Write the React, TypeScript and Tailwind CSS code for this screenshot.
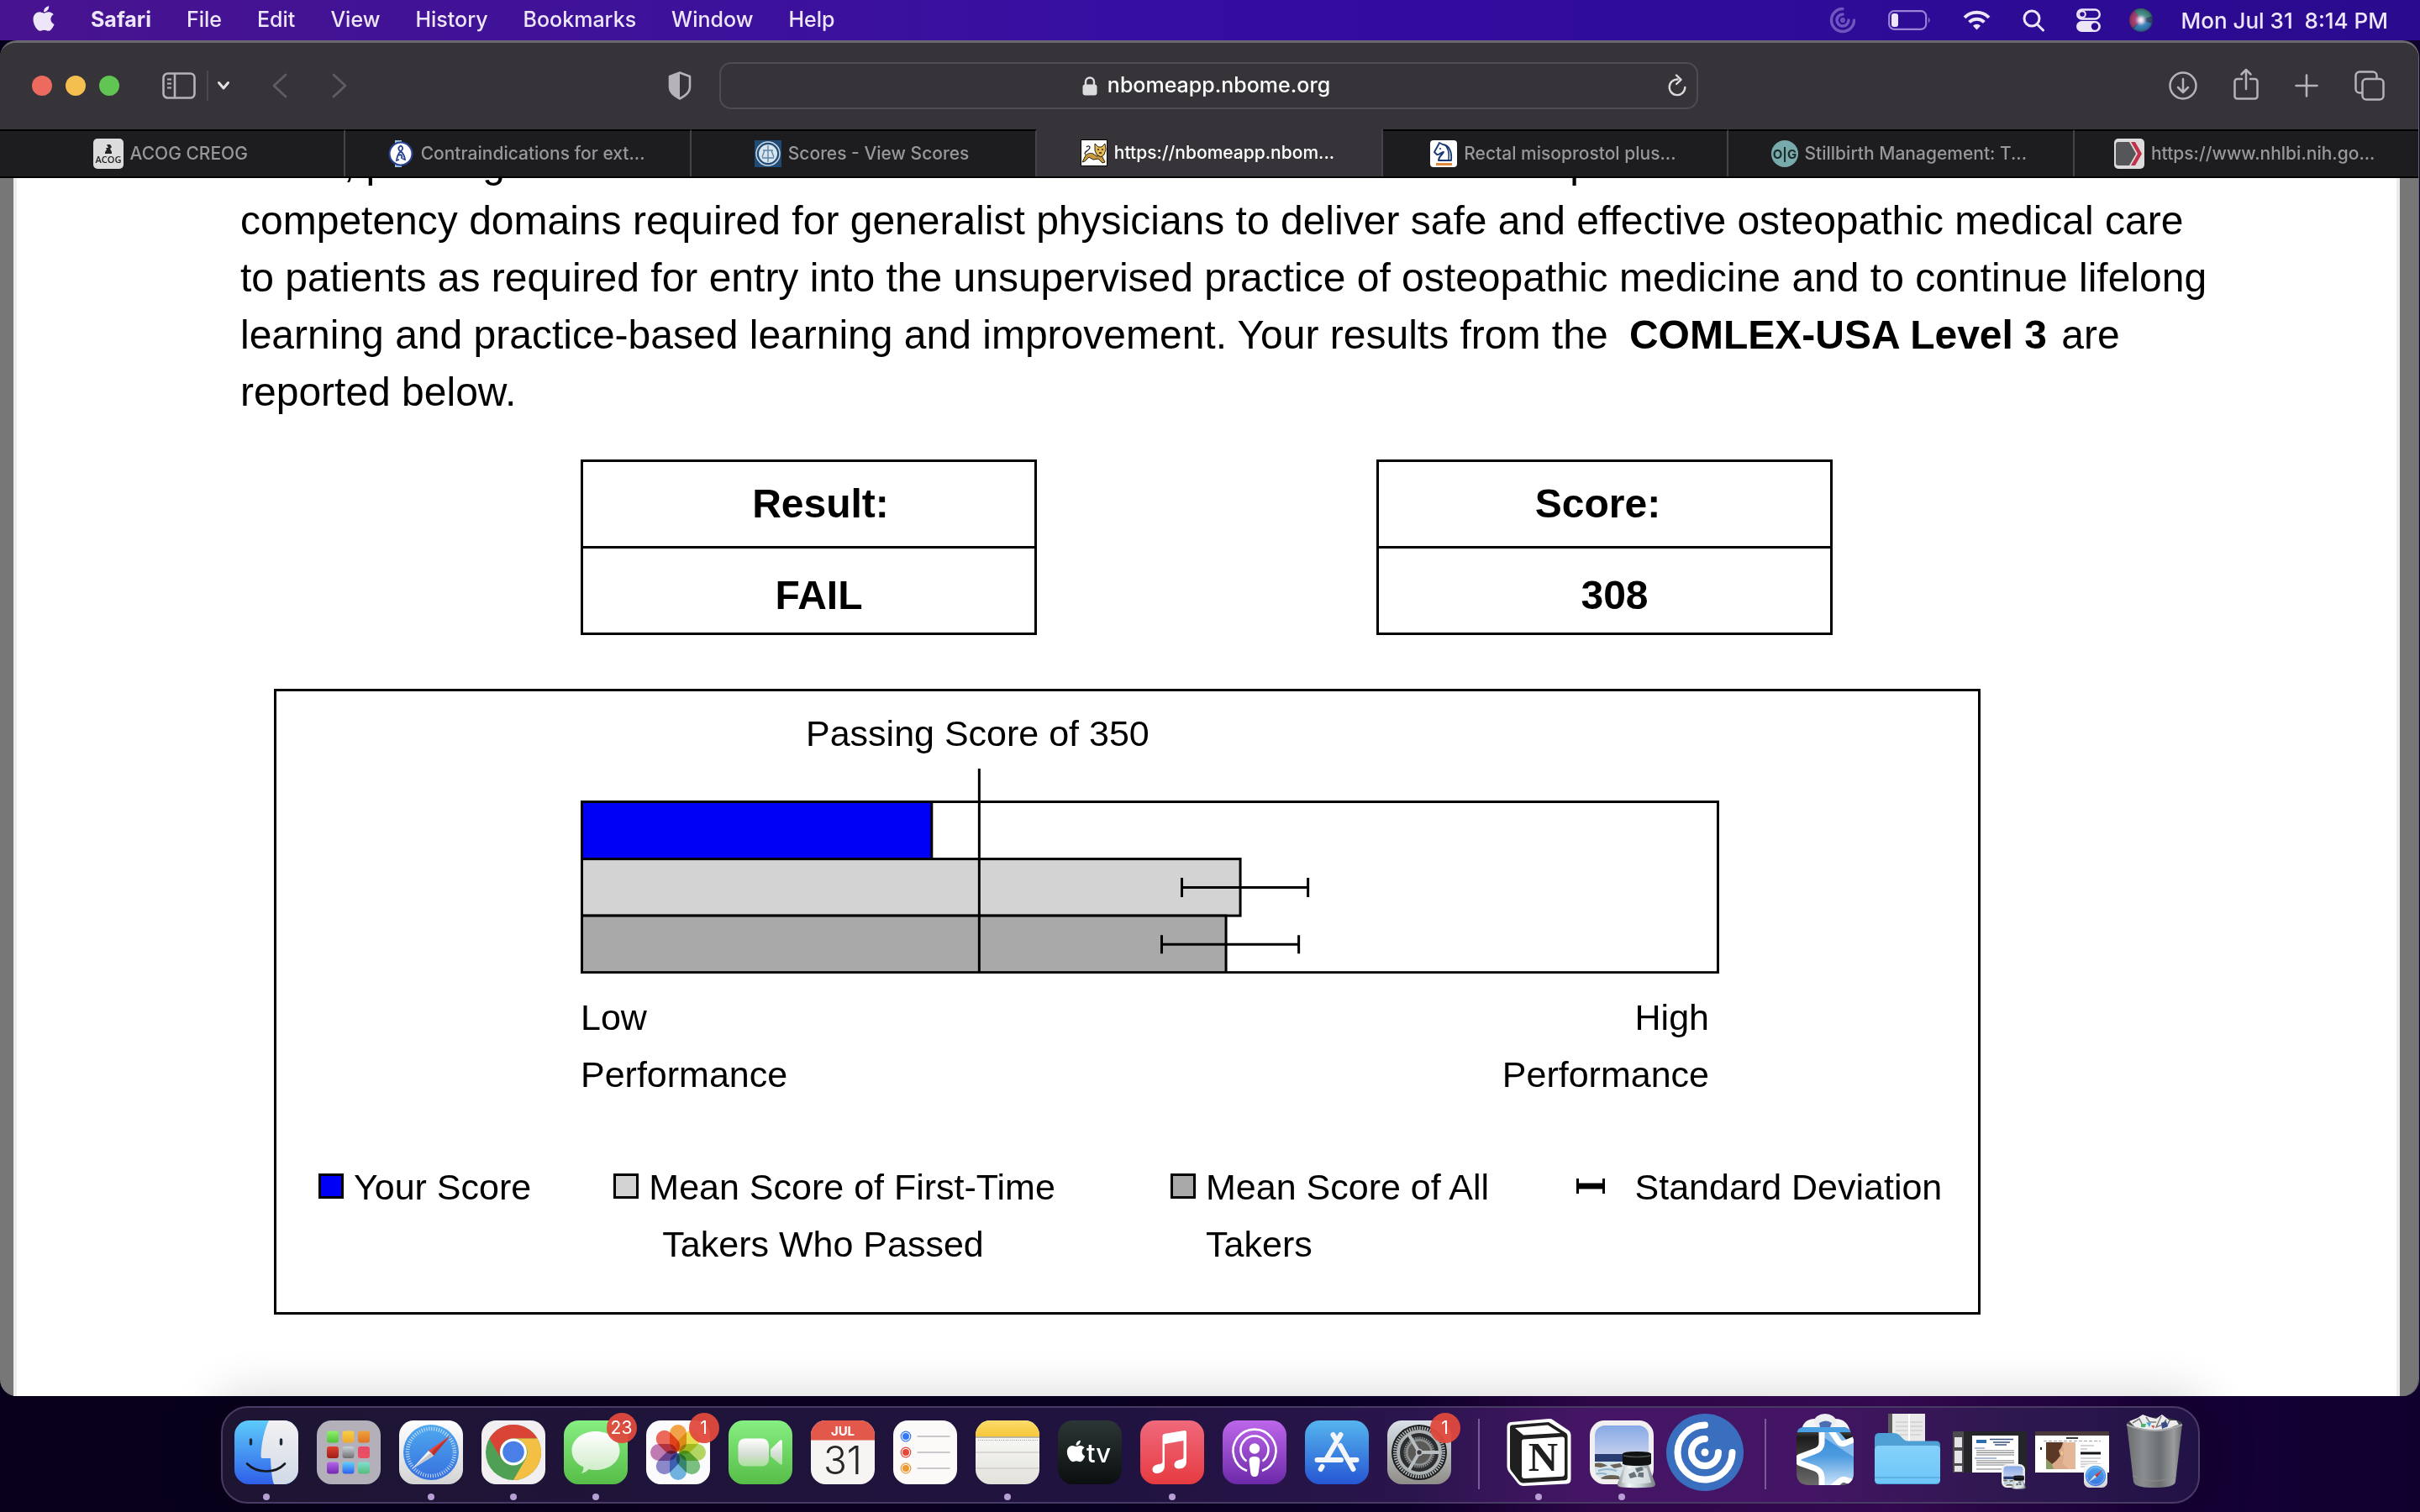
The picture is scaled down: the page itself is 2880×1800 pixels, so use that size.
import React from "react";
import { FaApple } from "react-icons/fa";

type Stop = [string, string];

function Gradient({ id, stops, horizontal = false }: { id: string; stops: Stop[]; horizontal?: boolean }) {
  return (
    <linearGradient id={id} x1="0" y1="0" x2={horizontal ? "1" : "0"} y2={horizontal ? "0" : "1"}>
      {stops.map(([offset, color]) => (
        <stop key={offset + color} offset={offset} stopColor={color} />
      ))}
    </linearGradient>
  );
}

/* ---------- Menu bar ---------- */

const menus = ["File", "Edit", "View", "History", "Bookmarks", "Window", "Help"];

function MenuBar() {
  return (
    <header className="flex h-12 shrink-0 items-center justify-between bg-linear-to-r from-[#48138f] via-[#340da3] to-[#2a0a8e] px-[38px] text-[25px] text-[#ece6f8]">
      <nav className="flex items-center gap-[42px]" aria-label="Menu bar">
        <button aria-label="Apple menu" className="-mt-1">
          <FaApple className="size-[34px] w-[28px]" />
        </button>
        <button className="font-bold">Safari</button>
        {menus.map((m) => (
          <button key={m} className="font-medium">
            {m}
          </button>
        ))}
      </nav>
      <div className="flex items-center gap-[38px]">
        <svg className="h-8 w-8 opacity-40" viewBox="0 0 32 32" fill="none" stroke="#cfc4f5" strokeWidth="3.4" strokeLinecap="round">
          <path d="M16 2.500A13.500 13.500 0 1 0 29.500 16" />
          <path d="M16 9a7 7 0 1 0 7 7" />
          <circle cx="16" cy="16" r="1.200" />
        </svg>
        <svg className="h-6 w-[51px]" viewBox="0 0 51 24" fill="none">
          <rect x="1.200" y="1.200" width="44" height="21.600" rx="6" stroke="#9a83d6" strokeWidth="2.200" />
          <rect x="4" y="4" width="8" height="16" rx="3" fill="#ece6f8" />
          <path d="M48 8.500q3 3.500 0 7z" fill="#9a83d6" />
        </svg>
        <svg className="h-6 w-[33px]" viewBox="0 0 33 24" fill="none" stroke="#ece6f8" strokeWidth="4">
          <path d="M2 8.800a20.500 20.500 0 0 1 29 0" />
          <path d="M7.600 14.400a12.600 12.600 0 0 1 17.800 0" />
          <path d="M16.500 23.500l-4.500-4.800a6.300 6.300 0 0 1 9 0z" fill="#ece6f8" stroke="none" />
        </svg>
        <svg className="h-7 w-[26px]" viewBox="0 0 26 28" fill="none" stroke="#ece6f8" strokeWidth="3" strokeLinecap="round">
          <circle cx="11" cy="12" r="9" />
          <path d="M17.500 19l7 7" />
        </svg>
        <svg className="h-7 w-[29px]" viewBox="0 0 29 28" fill="none">
          <rect x="1.200" y="1.500" width="26.600" height="11" rx="5.500" stroke="#ece6f8" strokeWidth="2.400" />
          <circle cx="7" cy="7" r="3.800" stroke="#ece6f8" strokeWidth="2" />
          <rect x="0" y="15" width="29" height="13" rx="6.500" fill="#ece6f8" />
          <circle cx="22" cy="21.500" r="4.200" fill="#2c0b92" />
        </svg>
        <svg className="-ml-1 h-7 w-7" viewBox="0 0 28 28">
          <defs>
            <radialGradient id="siri" cx="0.500" cy="0.500" r="0.500">
              <stop offset="0" stopColor="#fff" />
              <stop offset="0.250" stopColor="#e9d6ef" stopOpacity="0.800" />
              <stop offset="0.600" stopColor="#4b78a8" stopOpacity="0.150" />
              <stop offset="1" stopColor="#1c2440" stopOpacity="0.500" />
            </radialGradient>
          </defs>
          <circle cx="14" cy="14" r="14" fill="#31405f" />
          <path d="M14 14L6 2.500A14 14 0 0 0 4 23.500z" fill="#c22f62" />
          <path d="M14 14L6 2.500A14 14 0 0 1 27 9z" fill="#3f8f76" />
          <path d="M14 14l13 4A14 14 0 0 1 5 24.500z" fill="#2f7fb6" />
          <circle cx="14" cy="14" r="14" fill="url(#siri)" />
        </svg>
        <time className="-ml-1 text-[26px] font-medium whitespace-pre">Mon Jul 31  8:14 PM</time>
      </div>
    </header>
  );
}

/* ---------- Browser toolbar ---------- */

function Toolbar() {
  return (
    <div className="flex h-[103px] shrink-0 items-center bg-[#363439] pb-[2px] text-[#b5b3b8]">
      <div className="flex w-[856px] shrink-0 items-center pr-[33px] pl-[38px]">
        <div className="flex gap-4">
          <button aria-label="Close" className="size-6 rounded-full bg-[#ed6a5e]" />
          <button aria-label="Minimize" className="size-6 rounded-full bg-[#f4bf4f]" />
          <button aria-label="Zoom" className="size-6 rounded-full bg-[#61c554]" />
        </div>
        <button aria-label="Show sidebar" className="ml-[51px]">
          <svg className="h-[32px] w-[40px]" viewBox="0 0 40 32" fill="none" stroke="currentColor" strokeWidth="2.600">
            <rect x="1.500" y="1.500" width="37" height="29" rx="5" />
            <path d="M15 2v28" />
            <path d="M6 8.500h5M6 13.500h5M6 18.500h5" strokeWidth="2" />
          </svg>
        </button>
        <div className="ml-[13px] h-9 w-[2px] bg-[#4b494e]" />
        <button aria-label="Tab groups" className="ml-[10px]">
          <svg className="h-3 w-4" viewBox="0 0 16 12" fill="none" stroke="#e3e2e5" strokeWidth="3" strokeLinecap="round" strokeLinejoin="round">
            <path d="M2.500 2.500L8 9l5.500-6.500" />
          </svg>
        </button>
        <button aria-label="Back" className="ml-[50px] text-[#5f5d62]">
          <svg className="h-[30px] w-[18px]" viewBox="0 0 18 30" fill="none" stroke="currentColor" strokeWidth="2.800" strokeLinecap="round" strokeLinejoin="round">
            <path d="M16 2L2 15l14 13" />
          </svg>
        </button>
        <button aria-label="Forward" className="ml-[53px] text-[#5f5d62]">
          <svg className="h-[30px] w-[18px]" viewBox="0 0 18 30" fill="none" stroke="currentColor" strokeWidth="2.800" strokeLinecap="round" strokeLinejoin="round">
            <path d="M2 2l14 13L2 28" />
          </svg>
        </button>
        <button aria-label="Privacy report" className="ml-auto">
          <svg className="h-[34px] w-[28px]" viewBox="0 0 28 34" fill="none">
            <path d="M14 1.500L26 6v13c0 6-5 10-12 13.500C7 29 2 25 2 19V6z" stroke="currentColor" strokeWidth="2.600" strokeLinejoin="round" />
            <path d="M14 1.500V32.500C7 29 2 25 2 19V6z" fill="currentColor" />
          </svg>
        </button>
      </div>
      <div className="flex h-14 flex-1 items-center rounded-[14px] border-2 border-[#4e4c52] pr-3">
        <label className="flex flex-1 items-center justify-center gap-3 pl-[28px] text-white">
          <svg className="h-6 w-[18px]" viewBox="0 0 18 24" fill="none">
            <path d="M4 12V7.500a5 5 0 0 1 10 0V12" stroke="#dcdbde" strokeWidth="2.400" />
            <rect x="0.500" y="10.500" width="17" height="13" rx="3" fill="#dcdbde" />
          </svg>
          <input aria-label="Address" className="field-sizing-content bg-transparent text-[25px] font-medium outline-none" defaultValue="nbomeapp.nbome.org" />
        </label>
        <button aria-label="Reload">
          <svg className="h-[27px] w-[22px]" viewBox="0 0 22 27" fill="none" stroke="#dcdbde" strokeWidth="2.400" strokeLinecap="round" strokeLinejoin="round">
            <path d="M11.500 6.500A9.300 9.300 0 1 0 20.300 16" />
            <path d="M10 1.500l5.500 5.300L10.200 12" />
          </svg>
        </button>
      </div>
      <div className="flex w-[857px] shrink-0 items-center justify-end gap-[43px] pr-10">
        <button aria-label="Downloads">
          <svg className="size-[34px]" viewBox="0 0 34 34" fill="none" stroke="currentColor" strokeWidth="2.500" strokeLinecap="round" strokeLinejoin="round">
            <circle cx="17" cy="17" r="15.500" />
            <path d="M17 9v15.500M11 19l6 6 6-6" />
          </svg>
        </button>
        <button aria-label="Share" className="-mt-1">
          <svg className="h-[38px] w-[30px]" viewBox="0 0 30 38" fill="none" stroke="currentColor" strokeWidth="2.500" strokeLinecap="round" strokeLinejoin="round">
            <path d="M10 13H4.500a3 3 0 0 0-3 3v17.500a3 3 0 0 0 3 3h21a3 3 0 0 0 3-3V16a3 3 0 0 0-3-3H20" />
            <path d="M15 25V2M9.500 7.500L15 2l5.500 5.500" />
          </svg>
        </button>
        <button aria-label="New tab">
          <svg className="size-7" viewBox="0 0 28 28" fill="none" stroke="currentColor" strokeWidth="2.600" strokeLinecap="round">
            <path d="M14 1.500v25M1.500 14h25" />
          </svg>
        </button>
        <button aria-label="Tab overview">
          <svg className="size-9" viewBox="0 0 36 36" fill="none" stroke="currentColor" strokeWidth="2.500">
            <rect x="9.500" y="10" width="25" height="24.500" rx="4.500" />
            <path d="M9.500 26.500H6A4.500 4.500 0 0 1 1.500 22V6A4.500 4.500 0 0 1 6 1.500h16A4.500 4.500 0 0 1 26.500 6v4" />
          </svg>
        </button>
      </div>
    </div>
  );
}

const tabs: { title: string; icon: React.ReactNode }[] = [
  {
    title: "ACOG CREOG",
    icon: (
      <svg className="size-9" viewBox="0 0 36 36">
        <rect width="36" height="36" rx="5" fill="#dcdcdc" />
        <path d="M16 7h4l2 3-2 2 2 4v2h-8v-2l2-3-1-2h3z" fill="#222" />
        <text x="18" y="28.500" textAnchor="middle" fontFamily="Open Sans" fontWeight="600" fontSize="11" fill="#222">ACOG</text>
      </svg>
    ),
  },
  {
    title: "Contraindications for ext...",
    icon: (
      <svg className="h-8 w-8" viewBox="0 0 32 32">
        <rect x="9" width="8" height="5" fill="#9cc0de" />
        <rect x="9" y="27" width="8" height="5" fill="#9cc0de" />
        <circle cx="16" cy="16" r="13.500" fill="#fff" stroke="#27408f" strokeWidth="2.200" />
        <path d="M16 6.500c-4 2-3 5-.5 6.500 3.500-1.500 3.500-5 .5-6.500zM15.500 13c-2.500 3-4 7-4.500 11l3-1M16 13c3 3 4.500 6 5 10l-3-1M13.500 18c3-2 5 1 3 4" fill="none" stroke="#27408f" strokeWidth="1.800" />
      </svg>
    ),
  },
  {
    title: "Scores - View Scores",
    icon: (
      <svg className="h-8 w-8" viewBox="0 0 32 32">
        <rect width="32" height="32" fill="#1f4b74" />
        <circle cx="16" cy="16" r="14" fill="none" stroke="#c8d8e6" strokeWidth="1.500" />
        <circle cx="16" cy="16" r="11" fill="#d8e4ee" />
        <path d="M16 6v20M10 12h12M12 12l-3 8M20 12l3 8M9 21h14" stroke="#5f86a8" strokeWidth="1.400" fill="none" />
      </svg>
    ),
  },
  {
    title: "https://nbomeapp.nbom...",
    icon: (
      <svg className="h-8 w-8" viewBox="0 0 32 32">
        <rect x="0.500" y="0.500" width="31" height="31" fill="#fff" stroke="#000" />
        <path d="M2 27l4-8c3-3 6-3 9-2l4 3 6-1 4 8-3 1-5-5-6 1-5-3-5 5z" fill="#c99a3c" stroke="#2b2111" strokeWidth="1" />
        <path d="M17 5l4 4h4l4-4 1 7-2 6-4 3-5-3-2-5z" fill="#e6b84d" stroke="#2b2111" strokeWidth="1" />
        <path d="M20 12h2M25 12h2M22 16h3" stroke="#222" strokeWidth="1.500" />
        <path d="M6 18c-4-3 6-5 5-9-1-2-3-1-4 0" fill="none" stroke="#222" strokeWidth="1.300" />
      </svg>
    ),
  },
  {
    title: "Rectal misoprostol plus...",
    icon: (
      <svg className="h-8 w-8" viewBox="0 0 32 32">
        <rect width="32" height="32" rx="4" fill="#fff" />
        <path d="M10 24c0-5 5-7 6-10-3 0-5 4-8 3l-3-3 5-9 1-2 4 2c8 1 11 9 10 19z" fill="#fff" stroke="#173a75" strokeWidth="1.900" strokeLinejoin="round" />
        <path d="M17 5c5 4 6 10 5 18" fill="none" stroke="#173a75" strokeWidth="1.600" />
        <circle cx="12" cy="10" r="1" fill="#173a75" />
        <rect x="7" y="27" width="19" height="3" fill="#e08a3c" />
      </svg>
    ),
  },
  {
    title: "Stillbirth Management: T...",
    icon: (
      <svg className="h-8 w-8" viewBox="0 0 32 32">
        <circle cx="16" cy="16" r="16" fill="#79aaab" />
        <text x="16" y="21.500" textAnchor="middle" fontFamily="Inter" fontWeight="700" fontSize="15" fill="#1c2b2c">O|G</text>
      </svg>
    ),
  },
  {
    title: "https://www.nhlbi.nih.go...",
    icon: (
      <svg className="size-9" viewBox="0 0 36 36">
        <rect width="36" height="36" rx="5" fill="#dcdcdc" />
        <path d="M5 4h13l8 14-8 14H5q-3 0-3-3V7q0-3 3-3z" fill="#55565a" />
        <path d="M20 4h5l8 14-8 14h-5l8-14z" fill="#c2314a" />
      </svg>
    ),
  },
];

function TabBar() {
  return (
    <div role="tablist" className="flex h-[58px] shrink-0 border-b-2 border-black">
      {tabs.map((tab, i) => {
        const active = i === 3;
        return (
          <button
            key={tab.title}
            role="tab"
            aria-selected={active}
            className={
              active
                ? "flex flex-1 items-center justify-center gap-2 border-r-2 border-[#454449] bg-[#363439] pr-1 text-[21px] font-medium whitespace-nowrap text-white"
                : "flex flex-1 items-center justify-center gap-2 border-t-2 border-r-2 border-t-black border-r-[#454449] bg-[#1d1c1f] pr-1 text-[21px] font-medium whitespace-nowrap text-[#98979a] last:border-r-0"
            }
          >
            {tab.icon}
            {tab.title}
          </button>
        );
      })}
    </div>
  );
}

/* ---------- Score report ---------- */

function ResultTable({ label, value, labelShift }: { label: string; value: string; labelShift: string }) {
  return (
    <table className="w-[543px] border-collapse text-center text-[48px] leading-[100px] font-bold">
      <tbody>
        <tr>
          <th scope="col" className={"border-3 border-black " + labelShift}>
            {label}
          </th>
        </tr>
        <tr>
          <td className="border-3 border-black pt-3 pl-6 leading-[88px]">{value}</td>
        </tr>
      </tbody>
    </table>
  );
}

function Swatch({ color }: { color: string }) {
  return <span className={"mt-[18px] size-[30px] shrink-0 border-3 border-black " + color} />;
}

function ScoreChart() {
  return (
    <svg className="mt-2 block w-full" viewBox="0 0 1354 244" role="img" aria-label="Score compared with the mean scores of other takers">
      <g stroke="#000" strokeWidth="3">
        <rect x="1.500" y="39.500" width="1351" height="203" fill="#fff" />
        <rect x="1.500" y="39.500" width="416" height="68" fill="#0000f5" />
        <rect x="1.500" y="107.500" width="783" height="67.500" fill="#d3d3d3" />
        <rect x="1.500" y="175" width="766" height="67.500" fill="#a9a9a9" />
        <path d="M474 0V243" fill="none" />
        <path d="M715 141.500H865M715 130v23M865 130v23" fill="none" />
        <path d="M691 209H854M691 198v22M854 198v22" fill="none" />
      </g>
    </svg>
  );
}

function Report() {
  return (
    <div className="min-h-0 flex-1 overflow-hidden bg-[#777] pr-[22px] pl-4">
      <article className="flow-root h-full border-x-4 border-[#ececec] bg-white font-['Liberation_Sans',sans-serif] text-black">
        <p className="-mt-[51px] ml-[266px] text-[48px] leading-[68px] whitespace-nowrap">
          levels, passing Level 3 indicates that the candidate has demonstrated competence in the foundational
          <br />
          competency domains required for generalist physicians to deliver safe and effective osteopathic medical care
          <br />
          to patients as required for entry into the unsupervised practice of osteopathic medicine and to continue lifelong
          <br />
          learning and practice-based learning and improvement. Your results from the{" "}
          <strong className="pr-1 pl-3">COMLEX-USA Level 3</strong> are
          <br />
          reported below.
        </p>
        <div className="mx-[671px] mt-[46px] flex justify-between">
          <ResultTable label="Result:" value="FAIL" labelShift="pl-7" />
          <ResultTable label="Score:" value="308" labelShift="pr-4" />
        </div>
        <section className="mt-[64px] mr-[495px] ml-[306px] border-3 border-black pt-4 pb-[47px] text-[43px] leading-[68px]">
          <div className="mr-[308px] ml-[362px]">
            <h2 className="ml-[268px]">Passing Score of 350</h2>
            <ScoreChart />
            <div className="mt-[18px] flex justify-between">
              <div>
                Low
                <br />
                Performance
              </div>
              <div className="pr-3 text-right">
                High
                <br />
                Performance
              </div>
            </div>
          </div>
          <ul className="mt-[66px] mr-[38px] ml-[50px] grid grid-cols-[351fr_662fr_482fr_440fr] whitespace-nowrap">
            <li className="flex gap-3">
              <Swatch color="bg-[#0000f5]" />
              Your Score
            </li>
            <li className="flex gap-3">
              <Swatch color="bg-[#d3d3d3]" />
              <span>
                Mean Score of First-Time
                <br />
                <span className="pl-4">Takers Who Passed</span>
              </span>
            </li>
            <li className="flex gap-3">
              <Swatch color="bg-[#a9a9a9]" />
              <span>
                Mean Score of All
                <br />
                Takers
              </span>
            </li>
            <li className="flex gap-9">
              <svg className="mt-[24px] h-[18px] w-[34px]" viewBox="0 0 34 18">
                <path d="M1.500 0v18M32.500 0v18" stroke="#000" strokeWidth="3" />
                <path d="M2 9h30" stroke="#000" strokeWidth="7" />
              </svg>
              Standard Deviation
            </li>
          </ul>
        </section>
      </article>
    </div>
  );
}

/* ---------- Dock ---------- */

const iconClass = "size-[76px] overflow-visible";

function Tile({ children, fill }: { children?: React.ReactNode; fill: string }) {
  return (
    <svg className={iconClass} viewBox="0 0 76 76">
      <rect width="76" height="76" rx="17.500" fill={fill} />
      {children}
    </svg>
  );
}

function Finder() {
  return (
    <Tile fill="url(#finderBlue)">
      <defs>
        <Gradient id="finderBlue" stops={[["0", "#5dcbfa"], ["1", "#2f5fe9"]]} />
        <Gradient id="finderGray" stops={[["0", "#f3f1f3"], ["1", "#cfd9e6"]]} />
      </defs>
      <path d="M41 0H58.500A17.500 17.500 0 0 1 76 17.500V58.500A17.500 17.500 0 0 1 58.500 76H47C44.500 69 43.500 58 43 45H33.500Q31.500 45 31.500 42.500C32 26 36 10 41 0z" fill="url(#finderGray)" />
      <path d="M19.500 23v5M55.500 23v5" stroke="#1d2a36" strokeWidth="3.400" strokeLinecap="round" />
      <path d="M15 51.500c12 12 34 12 45 0" fill="none" stroke="#15181f" strokeWidth="2.600" strokeLinecap="round" />
    </Tile>
  );
}

const padColors: [string, string][] = [
  ["#8ff06b", "#4fc23c"], ["#f8cf47", "#efa92f"], ["#efa13a", "#dd7327"],
  ["#e0402f", "#9d1f17"], ["#c9d2d8", "#6e6e70"], ["#e8486a", "#e9525f"],
  ["#b565e8", "#7228b0"], ["#5fd0fb", "#2f5ef0"], ["#7ee0d0", "#56bb7c"],
];

function Launchpad() {
  return (
    <Tile fill="#b3b0ba">
      <defs>
        {padColors.map(([a, b], i) => (
          <Gradient key={i} id={"pad" + i} stops={[["0", a], ["1", b]]} />
        ))}
      </defs>
      {padColors.map((_, i) => (
        <rect key={i} x={12 + (i % 3) * 18.500} y={12.500 + Math.floor(i / 3) * 18.500} width="14" height="14" rx="3" fill={`url(#pad${i})`} />
      ))}
    </Tile>
  );
}

function SafariFace({ id }: { id: string }) {
  return (
    <>
      <defs>
        <Gradient id={id + "w"} stops={[["0", "#ffffff"], ["1", "#d4d4d4"]]} />
        <Gradient id={id + "b"} stops={[["0", "#4fa9ee"], ["1", "#3670df"]]} />
      </defs>
      <rect width="76" height="76" rx="17.500" fill={`url(#${id}w)`} />
      <circle cx="38" cy="38" r="33" fill={`url(#${id}b)`} />
      <circle cx="38" cy="38" r="28" fill="none" stroke="#fff" strokeOpacity="0.800" strokeWidth="4.500" strokeDasharray="0.900 2.036" />
      <path d="M61 18L41 42l-6-6z" fill="#e8453c" />
      <path d="M15 58l20-22 6 6z" fill="#f4f4f4" />
      <path d="M61 18L41 42l-3-4z" fill="#b8332f" />
      <path d="M15 58l23-20 3 4z" fill="#c4c6ca" />
    </>
  );
}

function Safari() {
  return (
    <svg className={iconClass} viewBox="0 0 76 76">
      <SafariFace id="saf" />
    </svg>
  );
}

function Chrome() {
  return (
    <Tile fill="#f1eff1">
      <circle cx="38" cy="38" r="33" fill="#4f9f55" />
      <path d="M9.420 21.500A33 33 0 0 1 66.580 21.500H38A16.500 16.500 0 0 0 23.700 46.250z" fill="#da4437" />
      <path d="M66.580 21.500A33 33 0 0 1 38 71L52.300 46.250A16.500 16.500 0 0 0 38 21.500z" fill="#f3c043" />
      <circle cx="38" cy="37.500" r="16" fill="#fff" />
      <circle cx="38" cy="37.500" r="12.800" fill="#4a7fe8" />
    </Tile>
  );
}

function Messages() {
  return (
    <Tile fill="url(#msgG)">
      <defs>
        <Gradient id="msgG" stops={[["0", "#86ef81"], ["1", "#57bd48"]]} />
        <Gradient id="msgW" stops={[["0", "#ffffff"], ["1", "#cdebc6"]]} />
      </defs>
      <path d="M38 13c16 0 28.500 9.800 28.500 23S54 59 38 59c-3 0-6-.3-8.500-1-2 2.500-5 4.500-9 5 2-2 3-4.500 3-7.500C15 52 9.500 44.500 9.500 36 9.500 22.800 22 13 38 13z" fill="url(#msgW)" />
    </Tile>
  );
}

const petals = ["#f2962d", "#e5d935", "#a9cf4b", "#68b56e", "#5ba7db", "#7a78c4", "#b76aa8", "#ea5343"];

function Photos() {
  return (
    <Tile fill="#fbfafc">
      <g style={{ isolation: "isolate" }}>
        {petals.map((c, i) => (
          <rect key={c} x="28" y="5" width="20" height="32" rx="10" fill={c} opacity="0.880" transform={`rotate(${i * 45} 38 38)`} style={{ mixBlendMode: "multiply" }} />
        ))}
      </g>
    </Tile>
  );
}

function FaceTime() {
  return (
    <Tile fill="url(#msgG)">
      <defs>
        <Gradient id="ftW" stops={[["0", "#ffffff"], ["0.600", "#d3ddd2"], ["1", "#a9e39b"]]} />
      </defs>
      <rect x="11.500" y="21.500" width="36.500" height="33" rx="8" fill="url(#ftW)" />
      <path d="M50 34.500L61 24q3-2 3 1.500v25q0 3.500-3 1.500L50 42.500z" fill="url(#ftW)" />
    </Tile>
  );
}

function Calendar() {
  return (
    <Tile fill="#f6f5f4">
      <path d="M0 23.500V17.500A17.500 17.500 0 0 1 17.500 0H58.500A17.500 17.500 0 0 1 76 17.500V23.500z" fill="#e2594c" />
      <text x="38" y="18" textAnchor="middle" fontFamily="Inter" fontWeight="700" fontSize="15" fill="#fff">JUL</text>
      <text x="38" y="64" textAnchor="middle" fontFamily="Inter" fontWeight="300" fontSize="46" fill="#262626">31</text>
    </Tile>
  );
}

function Reminders() {
  return (
    <Tile fill="#fbfaf9">
      {["#3478f6", "#e5483a", "#ea9a34"].map((c, i) => (
        <g key={c}>
          <circle cx="15" cy={19 + i * 19} r="5.800" fill="none" stroke={c} strokeWidth="1.200" />
          <circle cx="15" cy={19 + i * 19} r="4" fill={c} />
          <path d={`M28.500 ${19 + i * 19}H67.500`} stroke="#b9b8bb" strokeWidth="1.600" />
        </g>
      ))}
    </Tile>
  );
}

function Notes() {
  return (
    <Tile fill="url(#noteW)">
      <defs>
        <Gradient id="noteW" stops={[["0", "#ffffff"], ["1", "#e2e1da"]]} />
        <Gradient id="noteY" stops={[["0", "#fbdc6c"], ["1", "#f6c636"]]} />
      </defs>
      <path d="M0 19.500V17.500A17.500 17.500 0 0 1 17.500 0H58.500A17.500 17.500 0 0 1 76 17.500V19.500z" fill="url(#noteY)" />
      <path d="M0 20H76" stroke="#a9a49a" strokeWidth="1.600" />
      <path d="M3 23.500H74" stroke="#9a978f" strokeWidth="1" strokeDasharray="1 1.500" />
      <path d="M0 38H76M0 57H76" stroke="#cfcecb" strokeWidth="1.400" />
    </Tile>
  );
}

function AppleTV() {
  return (
    <Tile fill="url(#tvG)">
      <defs>
        <Gradient id="tvG" stops={[["0", "#2c3735"], ["1", "#0b0e0f"]]} />
      </defs>
      <FaApple x="7" y="22" size="29" color="#fff" />
      <text x="34" y="50" fontFamily="Inter" fontWeight="500" fontSize="31" fill="#fff">tv</text>
    </Tile>
  );
}

function Music() {
  return (
    <Tile fill="url(#musG)">
      <defs>
        <Gradient id="musG" stops={[["0", "#f0697c"], ["1", "#e63b41"]]} />
      </defs>
      <path d="M26.500 18.500q0-2 2-2.500l24-4q2.500-.3 2.500 2V49c0 5-3.500 8.500-9 8.500-3.500 0-5.500-1.800-5.500-4.500 0-4.500 4-6 8-6.600q3-.4 3-3V24l-22.500 4V54c0 5.500-3.500 9-9 9-3.500 0-5.500-2-5.500-4.500 0-4.500 4-6 8-6.600q4-.5 4-3z" fill="#fff" />
    </Tile>
  );
}

function Podcasts() {
  return (
    <Tile fill="url(#podG)">
      <defs>
        <Gradient id="podG" stops={[["0", "#bd67ea"], ["1", "#6c29a9"]]} />
      </defs>
      <g fill="none" stroke="#fff" strokeWidth="2.600">
        <path d="M29 60A25.500 25.500 0 1 1 47 60" />
        <path d="M28.500 48.500A16.500 16.500 0 1 1 47.500 48.500" />
      </g>
      <circle cx="38" cy="33.500" r="6.200" fill="#fff" />
      <path d="M38 43c5 0 6.800 2 6.300 6.500l-1.600 13Q42 67 38 67t-4.700-4.500l-1.600-13C31.200 45 33 43 38 43z" fill="#fff" />
    </Tile>
  );
}

function AppStore() {
  return (
    <Tile fill="url(#appG)">
      <defs>
        <Gradient id="appG" stops={[["0", "#55b5ee"], ["1", "#2656d4"]]} />
      </defs>
      <g stroke="#f4f6fb" strokeWidth="6" strokeLinecap="round">
        <path d="M42.500 17L26 45M33.500 17l3 5M42 30L57.500 58M14.500 47H43M55 47h6.500M20.500 55l-1.800 3" />
      </g>
    </Tile>
  );
}

function Settings() {
  return (
    <Tile fill="url(#setG)">
      <defs>
        <Gradient id="setG" stops={[["0", "#d9e1e8"], ["1", "#8f8d89"]]} />
      </defs>
      <circle cx="38" cy="38" r="33" fill="#1c1e1f" />
      <circle cx="38" cy="38" r="29" fill="none" stroke="#b4b8ba" strokeWidth="4" strokeDasharray="1.600 1.436" />
      <circle cx="38" cy="38" r="25" fill="#2b2d2e" stroke="#aeb3b5" strokeWidth="4" />
      <circle cx="38" cy="38" r="16.500" fill="#5c5a56" stroke="#84888a" strokeWidth="4" strokeDasharray="1.500 1" />
      <circle cx="38" cy="38" r="14.500" fill="none" stroke="#8f9496" strokeWidth="2" />
      <path d="M38 38H62M38 38L26 17.500M38 38L26 58.500" stroke="#b9bec0" strokeWidth="4" />
      <circle cx="38" cy="38" r="3.500" fill="#3a3c3d" stroke="#c4c8ca" strokeWidth="1.500" />
    </Tile>
  );
}

function Notion() {
  return (
    <svg className={iconClass} viewBox="0 0 76 76">
      <path d="M5 2L50-2q3-.3 5 1.200L74 12q2.500 2 2.500 5V70q0 5-5 5.500L20 78q-4 .3-6.500-3L2.500 61Q.5 58 .5 55V8q0-5.500 4.500-6z" fill="#fff" />
      <path d="M6 5.500L50 2l20 12.500q2.500 1.500 2.500 4V68q0 3-3 3.300L20 74.500q-3 .2-5-2.300L5.500 60Q4 58 4 55.500V8Q4 5.700 6 5.500z" fill="#1f1f1f" />
      <path d="M10 9l39-3.500L64 15l-44 2.500z" fill="#fff" />
      <path d="M20 22.500l46-3q3 0 3 3V63.500q0 3-3 3.200L22 69q-4 .2-4-3.500V25q0-2.300 2-2.500z" fill="#fff" />
      <text x="43.500" y="60" textAnchor="middle" fontFamily="Liberation Serif" fontWeight="700" fontSize="49" fill="#1f1f1f">N</text>
    </svg>
  );
}

function PreviewArt({ id }: { id: string }) {
  return (
    <>
      <defs>
        <Gradient id={id + "sky"} stops={[["0", "#85a9e6"], ["1", "#c5cfee"]]} />
        <Gradient id={id + "glass"} horizontal stops={[["0", "#8f9496"], ["0.300", "#f4f6f7"], ["0.600", "#c9d3d8"], ["1", "#777c7f"]]} />
        <clipPath id={id + "clip"}>
          <rect x="6" y="6" width="64" height="64" rx="12" />
        </clipPath>
      </defs>
      <rect width="76" height="76" rx="17.500" fill="#f1eff0" />
      <g clipPath={`url(#${id}clip)`}>
        <rect x="6" y="6" width="64" height="35" fill={`url(#${id}sky)`} />
        <rect x="6" y="40" width="64" height="10" fill="#2a3d73" />
        <rect x="6" y="49" width="64" height="22" fill="#d5e3ea" />
        <path d="M6 51q8-2 15 3l-8 2-7-1zM24 53l12-2 3 4-10 2zM14 68q8-5 20-2l4 5H12z" fill="#6b6256" />
        <path d="M10 60q10-4 22 0M6 64q8-2 14 0" stroke="#93b4c8" strokeWidth="2" fill="none" />
      </g>
      <path d="M41 53h29q3 10 8 22 .5 4-5 4.500-18 1.500-35 0-6-.5-5-4.500 5-12 8-22z" fill={`url(#${id}glass)`} />
      <path d="M42 57h26l5 17q-17 3-35 0z" fill="#dfe6e9" opacity="0.800" />
      <path d="M54 57l8-2 2 4-8 3zM46 64l7-3 3 6-8 2zM58 62l6 0 0 6-7-1z" fill="#68737b" />
      <path d="M39 40q0-3 17-3t17 3v11q0 3-17 3t-17-3z" fill="#101112" />
      <path d="M40 42q16 3 32 0" stroke="#4a4c4e" strokeWidth="1.500" fill="none" />
    </>
  );
}

function Preview() {
  return (
    <svg className={iconClass} viewBox="0 0 76 76">
      <PreviewArt id="pv" />
    </svg>
  );
}

function Citrix() {
  return (
    <svg className="size-[92px] shrink-0" viewBox="0 0 92 92">
      <circle cx="46" cy="46" r="46" fill="#3a6fc0" />
      <g fill="none" stroke="#fff" strokeWidth="8" strokeLinecap="round">
        <path d="M46 13.500A32.500 32.500 0 1 0 78.500 46" />
        <path d="M46 30A16 16 0 1 0 62 46" />
      </g>
      <circle cx="46" cy="46" r="4.500" fill="#fff" />
    </svg>
  );
}

function Anki() {
  return (
    <svg className={iconClass} viewBox="0 0 76 76">
      <defs>
        <Gradient id="ankiB" stops={[["0", "#2f86d8"], ["0.500", "#4d9be0"], ["1", "#d3e8fa"]]} />
        <Gradient id="ankiK" stops={[["0", "#8b8b8b"], ["0.250", "#1c1c1c"], ["1", "#6f6f6f"]]} />
        <clipPath id="ankiClip">
          <path d="M4 17q1-9 9-9h46q8 0 11 9l2 6v39q0 15-15 15H19Q4 77 4 62z" />
        </clipPath>
      </defs>
      <path d="M10 12q2-14 16-14h24q14 0 18 15z" fill="#f4f5f7" />
      <ellipse cx="38" cy="1" rx="13" ry="9" fill="#eceef1" />
      <path d="M31 3q8-5 15 0l-2 5H32z" fill="#4c6fb4" />
      <g clipPath="url(#ankiClip)">
        <rect x="0" y="0" width="76" height="80" fill="url(#ankiK)" />
        <path d="M35 6v20q0 8-9 11L10 44q-8 3 0 7l18 6q7 3 7 10v12h14l12-9 15 2V22l-12 2-16-18z" fill="url(#ankiB)" />
        <path d="M36 20l40 26V24l-12 0-16-18H36z" fill="#9fcbf1" opacity="0.700" />
        <path d="M34 10v17q0 7-9 10L9 43q-8 4 0 8l17 6q8 3 8 11v12M45 12l9 13q3 4 8 2l12-5M46 80l10-8q3-3 7-1l12 4" fill="none" stroke="#fff" strokeWidth="7" />
        <rect x="0" y="7" width="76" height="7" fill="#4a9fe2" />
      </g>
    </svg>
  );
}

function Folder() {
  return (
    <svg className={iconClass} viewBox="0 0 76 76">
      <defs>
        <Gradient id="folF" stops={[["0", "#84d1fb"], ["1", "#6dc6f8"]]} />
      </defs>
      <path d="M15-8h44v40H15z" fill="#e9e9ea" />
      <path d="M15-8h5v40h-5z" fill="#5c5c5e" />
      <path d="M24 2h32M24 7h32M24 12h32M24 17h30" stroke="#c3c3c6" strokeWidth="1.200" />
      <path d="M39-8h2v40h-2z" fill="#fff" />
      <path d="M-1 21q0-6 5-6H22q4 0 7 3l5 5q2 1.500 5 1.500H72q5 0 5 5V71q0 5-5 5H4q-5 0-5-5z" fill="#4e9fd4" />
      <path d="M-1 35q0-5 5-5H72q5 0 5 5V70q0 5-5 5H4q-5 0-5-5z" fill="url(#folF)" />
      <path d="M-1 68h78" stroke="#55acdd" strokeWidth="1.500" />
    </svg>
  );
}

function DocThumb() {
  return (
    <svg className={iconClass} viewBox="0 0 76 76">
      <rect x="-6" y="13" width="88" height="49" fill="#26262a" />
      <rect x="-6" y="13" width="13" height="49" fill="#4b4b50" />
      <path d="M-4 20h9v12h-9zM-4 36h9v15h-9zM-4 54h9v7h-9z" fill="#e4e4e6" />
      <rect x="17" y="18" width="55" height="44" fill="#fff" />
      <rect x="22" y="23" width="12" height="4" fill="#2d6eb0" />
      <path d="M38 22.500h28M42 26h20M44 29h14" stroke="#38507c" strokeWidth="1.600" />
      <path d="M22 36h45M22 38.500h45M22 41h45M22 48h45M22 50.500h45M22 53h45M22 58h30" stroke="#7b7b80" strokeWidth="1.100" />
      <path d="M20 33h12M20 45h26" stroke="#5f7fb4" strokeWidth="1.200" />
      <g transform="translate(52 52) scale(0.368)">
        <PreviewArt id="pvs" />
      </g>
    </svg>
  );
}

function WebThumb() {
  return (
    <svg className={iconClass} viewBox="0 0 76 76">
      <rect x="-6" y="13" width="88" height="49" fill="#fff" />
      <rect x="-6" y="13" width="88" height="5" fill="#4a3a3c" />
      <path d="M31 21h14" stroke="#222" strokeWidth="1.800" />
      <path d="M4 24.500h68" stroke="#a5a5aa" strokeWidth="1" strokeDasharray="4 2" />
      <rect x="7" y="26" width="35" height="32" fill="#d9a98a" />
      <path d="M7 26h20q-1 6-5 10l2 6-5 6-5 4-7-6z" fill="#5c3826" />
      <path d="M7 46l7 6 2 6H7z" fill="#8a9a62" />
      <path d="M27 31q3 10-1 20l8 7h8V26H29z" fill="#e3b797" />
      <path d="M26 37v4" stroke="#f3dc8a" strokeWidth="1.500" />
      <path d="M48 30h16M48 34h8M48 45h24M48 49h20M48 52h24M48 55h10" stroke="#a9a9ad" strokeWidth="1" />
      <rect x="48" y="37.500" width="24" height="3" fill="#151515" />
      <path d="M0 32h2v3H0z" fill="#222" />
      <g transform="translate(52 52) scale(0.368)">
        <SafariFace id="safs" />
      </g>
    </svg>
  );
}

function Trash() {
  return (
    <svg className={iconClass} viewBox="0 0 76 76">
      <defs>
        <Gradient id="trashG" horizontal stops={[["0", "#6b6d6f"], ["0.300", "#8b8e90"], ["0.600", "#6c6f71"], ["0.850", "#9a9c9e"], ["1", "#6a6c6e"]]} />
      </defs>
      <path d="M5 4Q38-6 71 4l-8 69q-1 7-25 7t-25-7z" fill="url(#trashG)" />
      <ellipse cx="38" cy="4" rx="33" ry="7.500" fill="#454749" />
      <path d="M8 1l10-4 6-4 8 3 8 2 7-5 9 7 8 0 3 5-6 2-6 3-10 2-12 0-9-2-9-2z" fill="#ececed" />
      <path d="M12 3l8-5 3 6M28-4l4 6 8 0M46-5l-6 13 8-3 4-6M56 0l-4 8" fill="none" stroke="#77797c" strokeWidth="1.500" />
      <path d="M22 4h6l-1 4h-5z" fill="#4cb56e" />
      <path d="M28 2l6 1-2 5z" fill="#3fa8da" />
      <path d="M46 3l6-2 2 6-7 3z" fill="#3a4a86" />
      <path d="M34 6l4 0-1 4z" fill="#d2503f" />
      <path d="M5 5q33 14 66 0" fill="none" stroke="#a7a9ab" strokeWidth="2" />
      <path d="M12 66q26 12 52 0" fill="none" stroke="#8c8e90" strokeWidth="1.500" opacity="0.600" />
    </svg>
  );
}

interface DockApp {
  name: string;
  art: React.ReactNode;
  badge?: string;
  running?: boolean;
}

const apps: DockApp[] = [
  { name: "Finder", art: <Finder />, running: true },
  { name: "Launchpad", art: <Launchpad /> },
  { name: "Safari", art: <Safari />, running: true },
  { name: "Chrome", art: <Chrome />, running: true },
  { name: "Messages", art: <Messages />, badge: "23", running: true },
  { name: "Photos", art: <Photos />, badge: "1" },
  { name: "FaceTime", art: <FaceTime /> },
  { name: "Calendar", art: <Calendar /> },
  { name: "Reminders", art: <Reminders /> },
  { name: "Notes", art: <Notes />, running: true },
  { name: "TV", art: <AppleTV /> },
  { name: "Music", art: <Music />, running: true },
  { name: "Podcasts", art: <Podcasts /> },
  { name: "App Store", art: <AppStore /> },
  { name: "System Settings", art: <Settings />, badge: "1" },
];

const recents: DockApp[] = [
  { name: "Notion", art: <Notion />, running: true },
  { name: "Preview", art: <Preview />, running: true },
  { name: "Citrix Workspace", art: <Citrix /> },
];

const stacks: DockApp[] = [
  { name: "Applications", art: <Anki /> },
  { name: "Documents", art: <Folder /> },
  { name: "Document window", art: <DocThumb /> },
  { name: "Web window", art: <WebThumb /> },
  { name: "Trash", art: <Trash /> },
];

function DockItem({ app, wide = false }: { app: DockApp; wide?: boolean }) {
  return (
    <button aria-label={app.name} className={wide ? "relative flex h-full w-[99px] items-center justify-center pb-[6px]" : "relative flex h-full w-[98px] items-center justify-center pb-[6px]"}>
      {app.art}
      {app.badge && (
        <span className="absolute top-[6px] right-0 flex size-9 items-center justify-center rounded-full bg-[#e0493d]/95 text-[21px] text-white">{app.badge}</span>
      )}
      {app.running && <span className="absolute bottom-[2px] size-2 rounded-full bg-[#b79fd6]" />}
    </button>
  );
}

function Separator() {
  return <div className="mx-[21px] mb-[2px] h-[84px] w-[2px] bg-[#7a5a96]" />;
}

function Dock() {
  return (
    <footer className="relative z-10 mt-3 mb-[10px] flex shrink-0 justify-center">
      <div className="flex h-[116px] items-center rounded-[32px] border-2 border-[#4a3a66] bg-[linear-gradient(90deg,#1e1533_0%,#201340_45%,#2a154c_60%,#451566_69%,#441465_80%,#2f1850_90%,#211245_100%)] px-[3px] shadow-[0_0_56px_14px_rgba(0,0,0,0.16)]">
        {apps.map((a) => (
          <DockItem key={a.name} app={a} />
        ))}
        <Separator />
        {recents.map((a) => (
          <DockItem key={a.name} app={a} wide />
        ))}
        <Separator />
        {stacks.map((a) => (
          <DockItem key={a.name} app={a} />
        ))}
      </div>
    </footer>
  );
}

export default function App() {
  return (
    <div className="flex h-screen flex-col overflow-hidden bg-[linear-gradient(90deg,#08001a_0%,#0a0024_45%,#0d002c_58%,#33084f_66%,#3a0a58_78%,#160036_90%,#10002e_100%)] font-[Inter,sans-serif]">
      <MenuBar />
      <main className="mr-[1px] flex min-h-0 flex-1 flex-col overflow-hidden rounded-[20px] border-t-3 border-r-1 border-[#69686c] bg-[#363439]">
        <Toolbar />
        <TabBar />
        <Report />
      </main>
      <Dock />
    </div>
  );
}
